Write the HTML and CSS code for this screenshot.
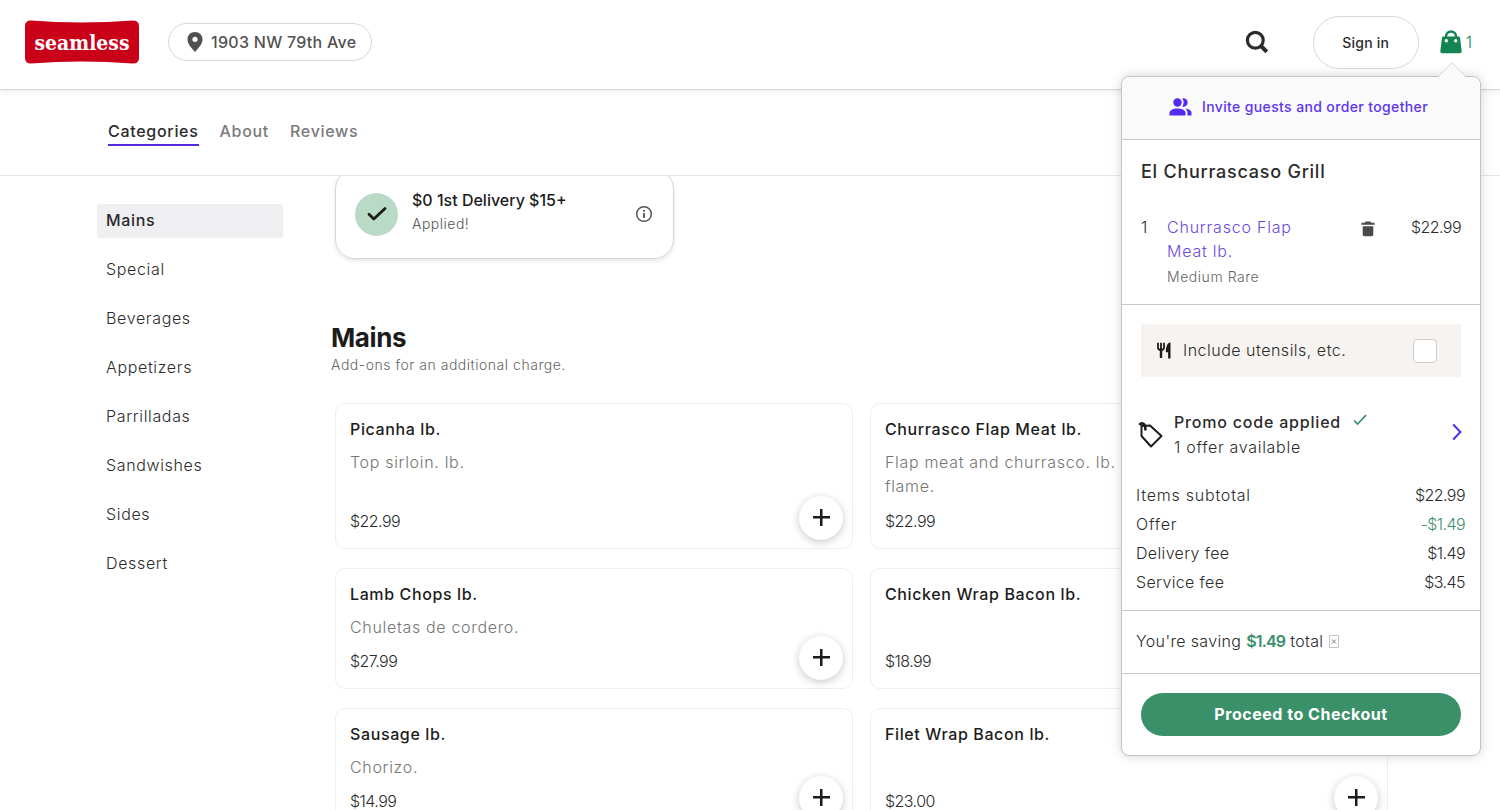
FILE: index.html
```html
<!DOCTYPE html>
<html lang="en">
<head>
  <meta charset="UTF-8" />
  <meta name="viewport" content="width=device-width, initial-scale=1.0" />
  <title>El Churrascaso Grill | Seamless</title>
  <link rel="stylesheet" href="styles.css">
</head>
<body>
  <header class="topbar">
    <a class="logo" href="#">
      <svg width="114" height="44" viewBox="0 0 114 44">
        <path d="M6 0.5 Q57 4.5 108 0.5 Q114 0.5 114 6 V38 Q114 43.5 108 43.5 Q57 39.5 6 43.5 Q0 43.5 0 38 V6 Q0 0.5 6 0.5 Z" fill="#ca0018" />
        <text class="logo-text" x="9.500" y="30" textLength="95" lengthAdjust="spacingAndGlyphs">seamless</text>
      </svg>
    </a>
    <button class="address">
      <svg width="16" height="20" viewBox="0 0 16 20">
        <path d="M8 0C3.6 0 .5 3.2.5 7.4.5 12 4.500 16 8 20c3.500-4 7.500-8 7.500-12.600C15.500 3.200 12.400 0 8 0z" fill="#505050" />
        <circle cx="8" cy="7.300" r="2.600" fill="#fff" />
      </svg>
      <span>1903 NW 79th Ave</span>
    </button>
    <div class="top-actions">
      <svg class="search" width="24" height="24" viewBox="0 0 24 24" fill="none" stroke="#2b2b2b">
        <circle cx="10.300" cy="10.200" r="7.900" stroke-width="3.200" />
        <path d="M16 16l5.800 5.800" stroke-width="4" />
      </svg>
      <button class="sign-in">Sign in</button>
      <button class="bag">
        <svg width="22" height="24" viewBox="0 0 22 24">
          <path d="M6 8V6.500a5 5 0 0 1 10 0V8" fill="none" stroke="#128552" stroke-width="2.400" />
          <path d="M3.500 6.500h15q1.300 0 1.500 1.300L21.700 21q.2 2.300-2 2.300H2.300Q.1 23.300.3 21L2 7.800q.2-1.300 1.500-1.300z" fill="#128552" />
          <circle cx="6.300" cy="10.800" r="1.700" fill="#fff" />
          <circle cx="15.700" cy="10.800" r="1.700" fill="#fff" />
        </svg>
        <span>1</span>
      </button>
    </div>
  </header>

  <nav class="tabs">
    <a class="tab active" href="#">Categories</a>
    <a class="tab" href="#">About</a>
    <a class="tab" href="#">Reviews</a>
  </nav>

  <main class="page">
    <ul class="sidebar">
      <li class="selected">Mains</li>
      <li>Special</li>
      <li>Beverages</li>
      <li>Appetizers</li>
      <li>Parrilladas</li>
      <li>Sandwishes</li>
      <li>Sides</li>
      <li>Dessert</li>
    </ul>

    <section class="menu">
      <div class="deal">
        <div class="deal-icon">
          <svg width="20" height="16" viewBox="0 0 20 16" fill="none" stroke="#1c1c1c" stroke-width="2.800" stroke-linecap="round" stroke-linejoin="round">
            <path d="M2 8.200l4.800 4.800L18 2.500" />
          </svg>
        </div>
        <div class="deal-text">
          <strong>$0 1st Delivery $15+</strong>
          <p>Applied!</p>
        </div>
        <svg width="18" height="18" viewBox="0 0 18 18">
          <circle cx="9" cy="9" r="7.300" fill="none" stroke="#555" stroke-width="1.500" />
          <path d="M8.100 8h1.800v5H8.100zM8.100 5h1.800v1.800H8.100z" fill="#555" />
        </svg>
      </div>

      <h2>Mains</h2>
      <p class="note">Add-ons for an additional charge.</p>

      <div class="items">
        <article class="item">
          <h3>Picanha lb.</h3>
          <p>Top sirloin. lb.</p>
          <div class="item-foot"><span>$22.99</span><button class="add"></button></div>
        </article>
        <article class="item">
          <h3>Churrasco Flap Meat lb.</h3>
          <p>Flap meat and churrasco. lb. 🔥<br>flame.</p>
          <div class="item-foot"><span>$22.99</span><button class="add"></button></div>
        </article>
        <article class="item">
          <h3>Lamb Chops lb.</h3>
          <p>Chuletas de cordero.</p>
          <div class="item-foot"><span>$27.99</span><button class="add"></button></div>
        </article>
        <article class="item">
          <h3>Chicken Wrap Bacon lb.</h3>
          <p></p>
          <div class="item-foot"><span>$18.99</span><button class="add"></button></div>
        </article>
        <article class="item">
          <h3>Sausage lb.</h3>
          <p>Chorizo.</p>
          <div class="item-foot"><span>$14.99</span><button class="add"></button></div>
        </article>
        <article class="item">
          <h3>Filet Wrap Bacon lb.</h3>
          <p></p>
          <div class="item-foot"><span>$23.00</span><button class="add"></button></div>
        </article>
      </div>
    </section>
  </main>

  <aside class="cart">
    <svg class="cart-arrow" width="30" height="16" viewBox="0 0 30 16">
      <path d="M1 16L15 1.500 29 16" fill="#fafafa" stroke="#d5d5d5" />
    </svg>
    <div class="invite">
      <svg width="23" height="18" viewBox="0 0 23 18" fill="#5529f0">
        <circle cx="8.500" cy="4.500" r="4.200" />
        <path d="M.5 17.500v-2.800c0-2.800 4.500-4.300 8-4.300s8 1.500 8 4.300v2.800z" />
        <path d="M13.200.5a4.200 4.200 0 1 1 0 8c1.900-2.300 1.900-5.700 0-8z" />
        <path d="M16 10.600c3.500.4 6.500 1.800 6.500 4.200v2.700h-4v-2.800c0-1.700-1-3-2.500-4.100z" />
      </svg>
      <span>Invite guests and order together</span>
    </div>

    <div class="order">
      <h4>El Churrascaso Grill</h4>
      <div class="line">
        <span class="qty">1</span>
        <div class="line-name">
          <a href="#">Churrasco Flap<br>Meat lb.</a>
          <p>Medium Rare</p>
        </div>
        <svg class="trash" width="14" height="16" viewBox="0 0 14 16" fill="#4a4a4a">
          <path d="M4.500 0.500h5l.6 1.300H13q.6 0 .6.700v1.300H.4V2.500q0-.7.600-.7h2.900zM1.700 5.200h10.600v8.300q0 1.800-1.800 1.800h-7q-1.800 0-1.800-1.800z" />
        </svg>
        <span class="price line-price">$22.99</span>
      </div>
    </div>

    <div class="extras">
      <label class="utensils">
        <svg width="14" height="17" viewBox="0 0 14 17">
          <path d="M1 .8v5Q1 8 4 8.200 7 8 7 5.800v-5M4 .8V16" fill="none" stroke="#1c1c1c" stroke-width="1.800" />
          <path d="M4 6v10" stroke="#1c1c1c" stroke-width="2.400" />
          <path d="M13.500.3V16.500h-2.400V10.300H8.800Q8.500 1.500 13.500.3z" fill="#1c1c1c" />
        </svg>
        <span>Include utensils, etc.</span>
        <i class="checkbox"></i>
      </label>

      <div class="promo">
        <svg width="26" height="28" viewBox="0 0 26 28" fill="none" stroke="#1c1c1c" stroke-width="2">
          <path d="M3.500 6L12 5.500l11.500 10.500L13 26.500 3.500 16z" stroke-linejoin="round" />
          <path d="M1.200 4.800Q3.500 2.500 5.500 3.800 8 5.500 7.200 10.500" stroke-width="2.600" />
        </svg>
        <div class="promo-text">
          <strong>Promo code applied
            <svg width="14" height="12" viewBox="0 0 14 12" fill="none" stroke="#3a9169" stroke-width="1.700"><path d="M1 6.500l3.500 3.500L13 1.200" /></svg>
          </strong>
          <p>1 offer available</p>
        </div>
        <svg class="chevron" width="10" height="18" viewBox="0 0 10 18" fill="none" stroke="#5529f0" stroke-width="2"><path d="M1.200 1.500L8.400 9l-7.200 7.500" /></svg>
      </div>

      <div class="row wide"><span>Items subtotal</span><span class="price">$22.99</span></div>
      <div class="row wide"><span>Offer</span><span class="price green">-$1.49</span></div>
      <div class="row"><span>Delivery fee</span><span class="price">$1.49</span></div>
      <div class="row"><span>Service fee</span><span class="price">$3.45</span></div>
    </div>

    <div class="saving">
      <span>You're saving <b>$1.49</b> total</span>
      <svg width="10" height="13" viewBox="0 0 10 13" fill="none" stroke="#c4c4c4"><path d="M.5.500h9v12h-9z" /><path d="M3 4.500l4 4m0-4l-4 4" stroke="#777" /></svg>
    </div>

    <div class="checkout">
      <button>Proceed to Checkout</button>
    </div>
  </aside>
</body>
</html>
```
FILE: styles.css
```css
* {
  box-sizing: border-box;
  font-family: Inter, "Open Sans", sans-serif;
}

body {
  margin: 0;
  height: 810px;
  overflow: hidden;
  background: #fff;
  color: #2b2b2b;
  font-size: 16px;
  font-weight: 300;
  line-height: 24px;
  position: relative;
}

h2, h3, h4, p, ul {
  margin: 0;
  padding: 0;
}

svg {
  display: block;
  flex: none;
}

a {
  text-decoration: none;
  color: inherit;
}

button {
  padding: 0;
  border: none;
  background: #fff;
  cursor: pointer;
}

/* header */
.topbar {
  display: flex;
  align-items: center;
  height: 90px;
  padding: 0 28px 5px 25px;
  border-bottom: 1px solid #d6d6d6;
  box-shadow: 0 2px 6px rgba(0, 0, 0, 0.07);
  position: relative;
}

.logo-text {
  font-family: "DejaVu Serif", serif;
  font-size: 20px;
  font-weight: bold;
  fill: #fff;
}

.address {
  display: flex;
  align-items: center;
  gap: 8px;
  width: 204px;
  height: 38px;
  margin-left: 29px;
  padding-left: 18px;
  border: 1px solid #d8d8d8;
  border-radius: 19px;
  color: #525252;
  font-size: 16px;
  font-weight: 500;
  letter-spacing: 0.28px;
}

.top-actions {
  display: flex;
  align-items: center;
  margin-left: auto;
}

.sign-in {
  width: 106px;
  height: 53px;
  margin: 0 21px 0 44px;
  border: 1px solid #d8d8d8;
  border-radius: 27px;
  color: #2b2b2b;
  font-size: 14px;
  font-weight: 500;
  letter-spacing: 0.2px;
}

.bag {
  display: flex;
  align-items: center;
  gap: 4px;
  color: #128552;
  font-size: 16px;
  font-weight: 300;
}

.tabs {
  display: flex;
  align-items: flex-start;
  height: 86px;
  padding: 29px 0 0 108px;
  gap: 21px;
  border-bottom: 1px solid #e6e6e6;
}

.tab {
  height: 27px;
  color: #7a7a7a;
  font-weight: 500;
  letter-spacing: 0.7px;
}

.tab.active {
  color: #2b2b2b;
  border-bottom: 2px solid #5529d8;
}

/* page */
.page {
  display: flex;
  height: 634px;
  overflow: hidden;
}

.sidebar {
  width: 186px;
  margin: 28px 48px 0 97px;
  list-style: none;
  flex: none;
}

.sidebar li {
  height: 34px;
  margin-bottom: 15px;
  padding: 0 9px;
  line-height: 33px;
  border-radius: 3px;
  letter-spacing: 0.65px;
}

.sidebar .selected {
  background: #efeef1;
  font-weight: 500;
}

.menu {
  width: 1057px;
  padding-left: 4px;
  flex: none;
}

.deal {
  display: flex;
  align-items: center;
  width: 339px;
  height: 90px;
  margin-top: -7px;
  padding: 0 20px 0 19px;
  border: 1px solid #d6d6d6;
  border-radius: 20px;
  box-shadow: 0 2px 4px rgba(0, 0, 0, 0.1);
}

.deal-icon {
  display: flex;
  align-items: center;
  justify-content: center;
  width: 43px;
  height: 43px;
  border-radius: 50%;
  background: #b8dac7;
}

.deal-text {
  flex: 1;
  padding: 0 0 4px 14px;
}

.deal-text strong {
  font-weight: 500;
  color: #1c1c1c;
}

.deal-text p {
  font-size: 14px;
  color: #555;
  letter-spacing: 0.5px;
}

.menu h2 {
  margin: 63px 0 0 -4px;
  font-size: 26px;
  line-height: 32px;
  font-weight: 700;
  letter-spacing: -0.4px;
  color: #1c1c1c;
}

.note {
  margin-left: -4px;
  font-size: 14px;
  line-height: 22px;
  letter-spacing: 0.52px;
  color: #666;
}

.items {
  display: grid;
  grid-template-columns: 518px 518px;
  grid-template-rows: 146px 121px 121px;
  gap: 19px 17px;
  margin-top: 27px;
}

.item {
  display: flex;
  flex-direction: column;
  padding: 13px 9px 15px 14px;
  border: 1px solid #efeef8;
  border-radius: 10px;
}

.item h3 {
  font-size: 16px;
  font-weight: 500;
  letter-spacing: 0.62px;
  color: #1c1c1c;
}

.item p {
  min-height: 24px;
  margin: 9px 0;
  letter-spacing: 0.68px;
  color: #767676;
}

.item-foot {
  display: flex;
  justify-content: space-between;
  align-items: center;
  height: 24px;
  margin-top: auto;
  letter-spacing: -0.55px;
}

.add {
  width: 44px;
  height: 44px;
  margin-top: -7px;
  border-radius: 50%;
  background:
    linear-gradient(#1c1c1c, #1c1c1c) center / 17px 2.5px no-repeat,
    linear-gradient(#1c1c1c, #1c1c1c) center / 2.5px 17px no-repeat,
    #fff;
  box-shadow: 0 2px 8px rgba(0, 0, 0, 0.22);
}

/* cart dropdown */
.cart {
  position: absolute;
  top: 76px;
  left: 1121px;
  width: 360px;
  height: 680px;
  border: 1px solid #c4c4c4;
  border-radius: 8px;
  background: #fff;
  box-shadow: 0 0 12px rgba(0, 0, 0, 0.17);
}

.cart-arrow {
  position: absolute;
  top: -16px;
  right: 13px;
}

.invite {
  display: flex;
  align-items: center;
  justify-content: center;
  gap: 10px;
  height: 63px;
  padding: 0 5px 2px 0;
  border-bottom: 1px solid #c8c8c8;
  border-radius: 8px 8px 0 0;
  background: #fafafa;
  color: #5d35ec;
  font-size: 14px;
  font-weight: 500;
  letter-spacing: 0.37px;
}

.order {
  height: 165px;
  padding: 20px 19px 0;
  border-bottom: 1px solid #c8c8c8;
}

.order h4 {
  font-size: 18px;
  font-weight: 500;
  letter-spacing: 0.75px;
}

.price {
  letter-spacing: -0.55px;
}

.line {
  display: flex;
  margin-top: 31px;
}

.qty {
  width: 26px;
}

.line-name {
  width: 194px;
}

.line-name a {
  color: #6b48e0;
  letter-spacing: 0.78px;
}

.line-name p {
  padding-top: 2px;
  font-size: 14px;
  color: #666;
  letter-spacing: 0.55px;
}

.trash {
  margin-top: 6px;
}

.line-price {
  margin-left: auto;
}

.extras {
  height: 306px;
  padding: 19px 15px 0 14px;
  border-bottom: 1px solid #c8c8c8;
}

.utensils {
  display: flex;
  align-items: center;
  height: 53px;
  margin: 0 4px 0 5px;
  padding: 0 24px 0 16px;
  background: #f7f3f0;
}

.utensils span {
  margin-left: 12px;
  padding-bottom: 2px;
  letter-spacing: 0.5px;
}

.checkbox {
  width: 24px;
  height: 24px;
  margin-left: auto;
  border: 1px solid #ccc;
  border-radius: 4px;
  background: #fff;
}

.promo {
  display: flex;
  align-items: center;
  height: 52px;
  margin: 31px 3px 23px 2px;
}

.promo-text {
  flex: 1;
  padding-left: 10px;
  letter-spacing: 0.7px;
}

.promo-text strong {
  display: flex;
  align-items: center;
  gap: 12px;
  height: 25px;
  font-weight: 500;
  letter-spacing: 0.8px;
}

.promo-text svg {
  margin-bottom: 4px;
}

.chevron {
  margin-bottom: 5px;
}

.row {
  display: flex;
  justify-content: space-between;
  height: 29px;
  line-height: 24px;
  letter-spacing: 0.35px;
}

.row.wide {
  letter-spacing: 0.78px;
}

.green {
  color: #3a9169;
}

.saving {
  display: flex;
  align-items: center;
  gap: 6px;
  height: 63px;
  padding: 0 14px 2px;
  border-bottom: 1px solid #c8c8c8;
  letter-spacing: 0.35px;
}

.saving b {
  color: #3a9169;
  font-weight: 600;
  letter-spacing: -0.8px;
}

.checkout {
  padding: 19px;
}

.checkout button {
  width: 100%;
  height: 43px;
  padding-bottom: 2px;
  border-radius: 22px;
  background: #3a9169;
  color: #fff;
  font-size: 16px;
  font-weight: 700;
  letter-spacing: 0.53px;
}
```
